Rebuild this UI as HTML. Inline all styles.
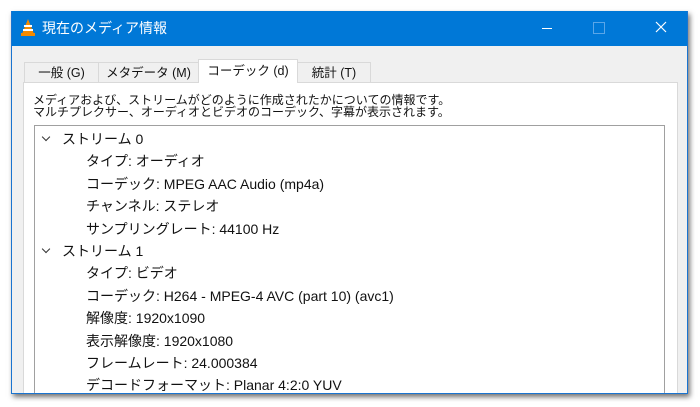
<!DOCTYPE html>
<html><head><meta charset="utf-8"><style>
body{margin:0;width:700px;height:407px;background:#fff;position:relative;overflow:hidden;font-family:"Liberation Sans","Noto Sans CJK JP",sans-serif;}
.win{position:absolute;left:11px;top:11px;width:677px;height:383px;background:#f0f0f0;box-shadow:2px 3px 5px rgba(0,0,0,.55);border:1px solid #1a74d0;border-top:none;box-sizing:border-box;overflow:hidden}
.title{position:absolute;left:0;top:0;width:100%;height:35px;background:#0078d7;color:#fff;font-size:14px;}
.title .t{position:absolute;left:30px;top:7px;}
.tab{position:absolute;top:51px;height:20px;border:1px solid #d9d9d9;border-bottom:none;background:#f0f0f0;font-size:12.5px;line-height:20px;text-align:center;box-sizing:border-box;color:#111}
.tab.sel{top:48px;height:24px;background:#fff;line-height:22px;z-index:2}
.panel{position:absolute;left:11px;top:71px;width:655px;height:330px;background:#fff;border:1px solid #d9d9d9;box-sizing:border-box;}
.desc{position:absolute;left:21px;top:83px;font-size:12px;line-height:12px;color:#111;}
.list{position:absolute;left:22px;top:114px;width:631px;height:270px;border:1px solid #a0a0a0;background:#fff;box-sizing:border-box;}
.r{position:absolute;font-size:14px;color:#111;white-space:nowrap}
.h{left:27px}.c{left:51px}
.arr{position:absolute;left:8px;width:5px;height:5px;border-right:1.5px solid #333;border-bottom:1.5px solid #333;transform:rotate(45deg)}
</style></head><body>
<div class="win">
<div class="title">
<svg style="position:absolute;left:9px;top:8px" width="14" height="17" viewBox="0 0 14 17"><polygon points="7,0 13,15 1,15" fill="#f48a00"/><rect x="3" y="6" width="8" height="2" fill="#fff"/><rect x="2" y="10" width="10" height="2" fill="#fff"/><rect x="0" y="14" width="14" height="3" fill="#f48a00"/></svg>
<span class="t">現在のメディア情報</span>
<div style="position:absolute;left:530px;top:17px;width:10px;height:1px;background:#fff"></div>
<div style="position:absolute;left:581px;top:11px;width:10px;height:10px;border:1px solid #5aa6e8"></div>
<svg style="position:absolute;left:643px;top:10px" width="12" height="12"><path d="M1 1L11 11M11 1L1 11" stroke="#fff" stroke-width="1.2"/></svg>
</div>
<div class="tab" style="left:12px;width:75px">一般 (G)</div>
<div class="tab" style="left:86px;width:101px">メタデータ (M)</div>
<div class="tab sel" style="left:186px;width:100px">コーデック (d)</div>
<div class="tab" style="left:285px;width:74px">統計 (T)</div>
<div class="panel"></div>
<div class="desc">メディアおよび、ストリームがどのように作成されたかについての情報です。<br>マルチプレクサー、オーディオとビデオのコーデック、字幕が表示されます。</div>
<div class="list">
<div class="arr" style="top:8px"></div><div class="r h" style="top:3px">ストリーム 0</div>
<div class="r c" style="top:25px">タイプ: オーディオ</div>
<div class="r c" style="top:48px">コーデック: MPEG AAC Audio (mp4a)</div>
<div class="r c" style="top:70px">チャンネル: ステレオ</div>
<div class="r c" style="top:93px">サンプリングレート: 44100 Hz</div>
<div class="arr" style="top:120px"></div><div class="r h" style="top:115px">ストリーム 1</div>
<div class="r c" style="top:137px">タイプ: ビデオ</div>
<div class="r c" style="top:160px">コーデック: H264 - MPEG-4 AVC (part 10) (avc1)</div>
<div class="r c" style="top:182px">解像度: 1920x1090</div>
<div class="r c" style="top:205px">表示解像度: 1920x1080</div>
<div class="r c" style="top:227px">フレームレート: 24.000384</div>
<div class="r c" style="top:249px">デコードフォーマット: Planar 4:2:0 YUV</div>
</div>
</div>
</body></html>
